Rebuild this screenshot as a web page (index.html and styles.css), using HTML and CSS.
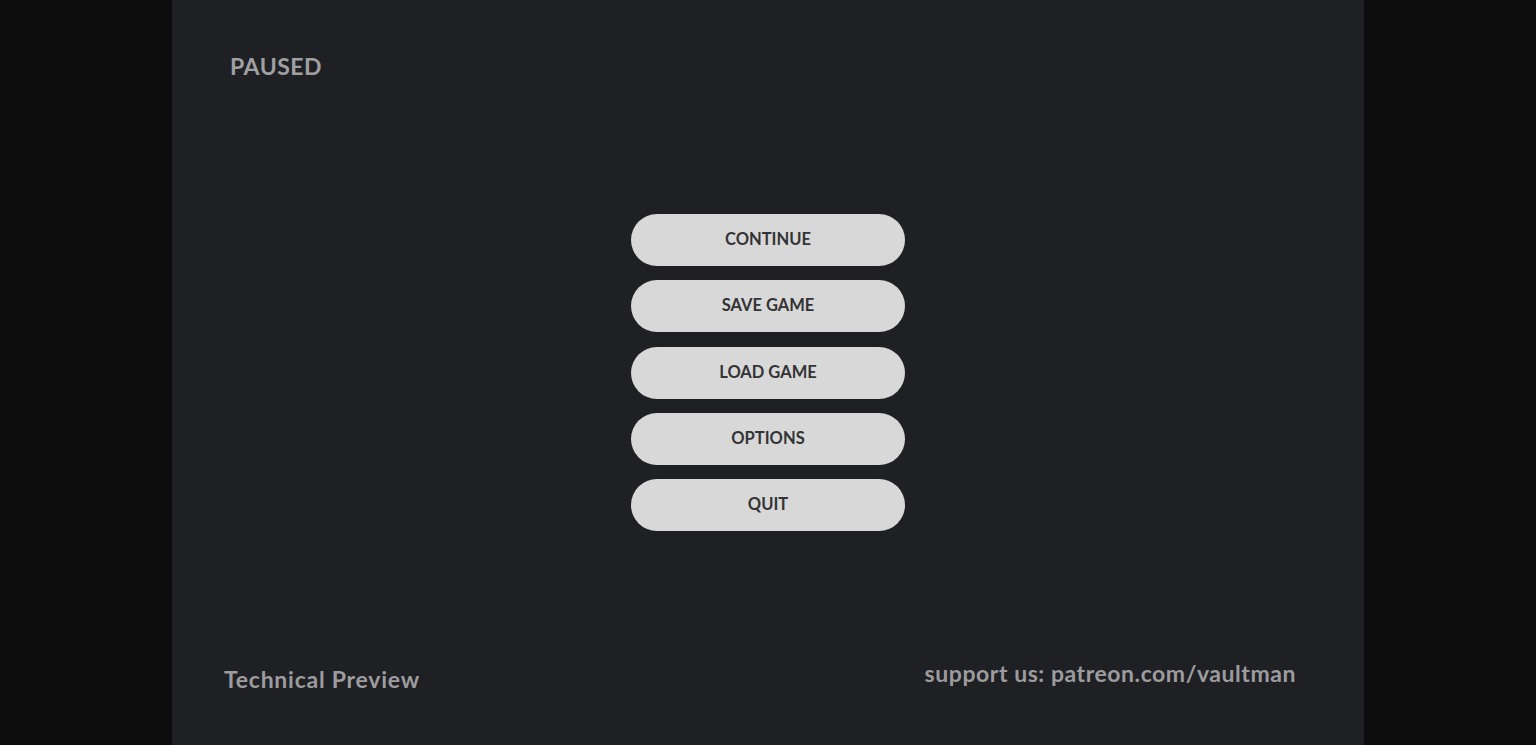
FILE: index.html
```html
<!DOCTYPE html>
<html lang="en">
<head>
<meta charset="utf-8">
<title>Paused</title>
<link rel="stylesheet" href="styles.css">
</head>
<body>
<div class="screen">
  <main class="panel">
    <header class="top">
      <h1 class="title">PAUSED</h1>
    </header>
    <nav class="menu">
      <button class="btn">CONTINUE</button>
      <button class="btn">SAVE GAME</button>
      <button class="btn">LOAD GAME</button>
      <button class="btn">OPTIONS</button>
      <button class="btn">QUIT</button>
    </nav>
    <footer class="bottom">
      <span class="preview">Technical Preview</span>
      <span class="support">support us: patreon.com/vaultman</span>
    </footer>
  </main>
</div>
</body>
</html>
```
FILE: styles.css
```css
html, body {
  margin: 0;
  padding: 0;
  height: 100%;
}
body {
  background: #0c0c0c;
  font-family: "Lato", "Noto Sans", sans-serif;
  overflow: hidden;
}
.screen {
  display: flex;
  justify-content: center;
  height: 745px;
}
.panel {
  width: 1192px;
  height: 745px;
  background: #1f2024;
  display: grid;
  grid-template-rows: 1fr auto 1fr;
}
.top {
  align-self: start;
  padding: 52px 0 0 58px;
}
.title {
  margin: 0;
  font-size: 23px;
  font-weight: 700;
  color: #a0a0a2;
  letter-spacing: 0.5px;
  line-height: 28px;
}
.menu {
  display: flex;
  flex-direction: column;
  align-items: center;
  gap: 14.3px;
}
.btn {
  width: 274px;
  height: 52px;
  border: none;
  border-radius: 26px;
  background: #d8d8d8;
  color: #333335;
  font-family: inherit;
  font-size: 16.5px;
  font-weight: 700;
  letter-spacing: 0;
  padding: 0 0 2px;
}
.bottom {
  align-self: end;
  display: flex;
  justify-content: space-between;
  align-items: flex-end;
  padding: 0 68px 52px 52px;
  color: #9c9c9e;
  font-weight: 700;
  font-size: 23px;
  line-height: 28px;
  letter-spacing: 0.75px;
}
.support {
  margin-bottom: 6px;
  letter-spacing: 0.55px;
}
```
